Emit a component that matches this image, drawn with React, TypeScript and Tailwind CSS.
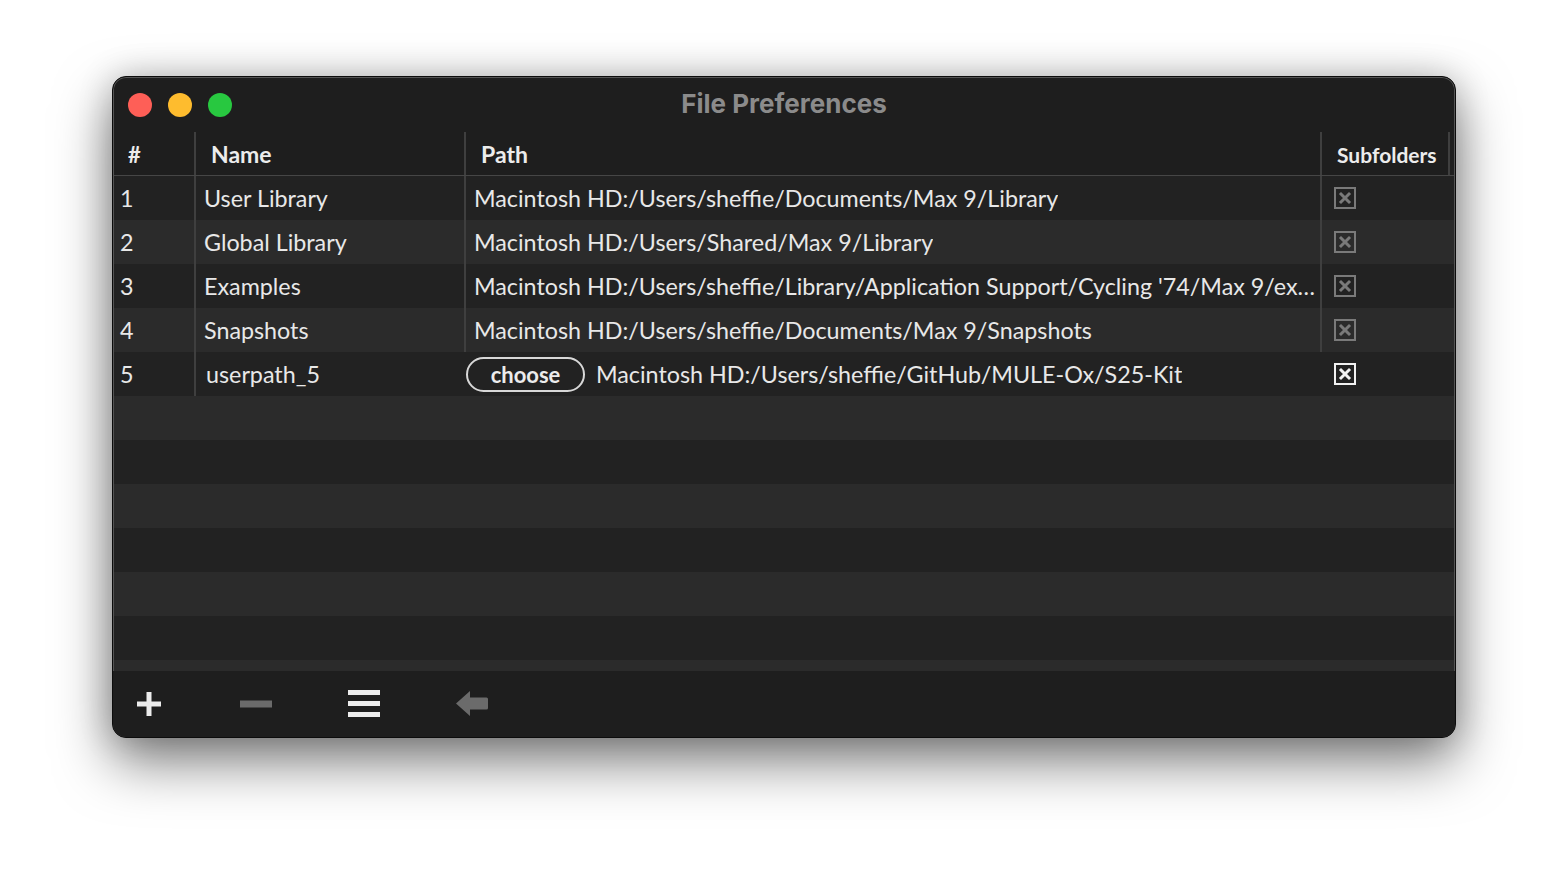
import React from "react";

type Entry = {
  n: number;
  name: string;
  path: string;
  custom?: boolean;
};

const entries: Entry[] = [
  { n: 1, name: "User Library", path: "Macintosh HD:/Users/sheffie/Documents/Max 9/Library" },
  { n: 2, name: "Global Library", path: "Macintosh HD:/Users/Shared/Max 9/Library" },
  {
    n: 3,
    name: "Examples",
    path: "Macintosh HD:/Users/sheffie/Library/Application Support/Cycling '74/Max 9/examples",
  },
  { n: 4, name: "Snapshots", path: "Macintosh HD:/Users/sheffie/Documents/Max 9/Snapshots" },
  { n: 5, name: "userpath_5", path: "Macintosh HD:/Users/sheffie/GitHub/MULE-Ox/S25-Kit", custom: true },
];

const fillerRows = 7;

function Checkbox({ active }: { active?: boolean }) {
  const c = active ? "#f2f2f2" : "#7a7a7a";
  return (
    <svg width="22" height="22" viewBox="0 0 22 22">
      <rect x="1" y="1" width="20" height="20" fill="none" stroke={c} strokeWidth="2" />
      <path d="M7 7 L15 15 M15 7 L7 15" stroke={c} strokeWidth="3" strokeLinecap="square" />
    </svg>
  );
}

function TrafficLights() {
  return (
    <div className="flex items-center gap-4">
      <span className="h-6 w-6 rounded-full bg-[#fe5f57]" />
      <span className="h-6 w-6 rounded-full bg-[#febc2e]" />
      <span className="h-6 w-6 rounded-full bg-[#28c840]" />
    </div>
  );
}

function Toolbar() {
  return (
    <div className="flex h-[66px] items-center bg-[#1e1e1e] pl-[24px]">
      {/* add */}
      <svg width="24" height="24" viewBox="0 0 24 24" className="mr-[79px]">
        <rect x="9.5" y="0" width="5" height="24" fill="#ececec" />
        <rect x="0" y="9.5" width="24" height="5" fill="#ececec" />
      </svg>
      {/* remove */}
      <svg width="32" height="8" viewBox="0 0 32 8" className="mr-[76px]">
        <rect x="0" y="0.5" width="32" height="7" fill="#6b6b6b" />
      </svg>
      {/* list */}
      <svg width="32" height="28" viewBox="0 0 32 28" className="mr-[76px]">
        <rect x="0" y="0" width="32" height="5" fill="#ececec" />
        <rect x="0" y="11" width="32" height="5" fill="#ececec" />
        <rect x="0" y="22" width="32" height="5" fill="#ececec" />
      </svg>
      {/* back */}
      <svg width="32" height="26" viewBox="0 0 32 26">
        <path
          d="M0 12.5 L14 0 L14 6.5 L30.5 6.5 Q32 6.5 32 8 L32 17 Q32 18.5 30.5 18.5 L14 18.5 L14 25 Z"
          fill="#6b6b6b"
        />
      </svg>
    </div>
  );
}

export default function App() {
  return (
    <main
      className="min-h-screen w-full bg-white pl-[112px] pt-[76px]"
      style={{ fontFamily: "Lato, 'Noto Sans', sans-serif" }}
    >
      <div className="flex h-[662px] w-[1344px] flex-col overflow-hidden rounded-[14px] border border-[#0c0c0c] bg-[#1e1e1e] shadow-[inset_0_0_0_1px_#545454,0_24px_55px_rgba(0,0,0,0.5),0_0_34px_rgba(0,0,0,0.2)]">
        <div className="flex h-[55px] shrink-0 items-center px-[15px]">
          <TrafficLights />
          <div
            className="flex-1 pb-[2px] pr-[104px] text-center text-[26px] font-bold text-[#8b8b8b]"
            style={{ fontFamily: "Inter, 'Open Sans', sans-serif" }}
          >
            File Preferences
          </div>
        </div>

        <div className="flex flex-1 flex-col overflow-hidden px-px">
          {/* header */}
          <div className="flex h-[44px] shrink-0 border-b border-[#464646] text-[22px] font-bold text-[#ececec]">
            <div className="flex w-[82px] items-center border-r-2 border-[#3f3f3f] pl-[14px] pt-[2px]">#</div>
            <div className="flex w-[270px] items-center border-r-2 border-[#3f3f3f] pl-[15px] pt-[2px] text-[23px]">
              Name
            </div>
            <div className="flex w-[856px] items-center border-r-2 border-[#3f3f3f] pl-[15px] pt-[2px] text-[23px]">
              Path
            </div>
            <div className="flex w-[128px] items-center border-r-2 border-[#3f3f3f] pl-[15px] pt-[2px] text-[21px]">
              Subfolders
            </div>
            <div className="flex-1" />
          </div>

          {/* rows */}
          {entries.map((e, i) => (
            <div
              key={e.n}
              className={`flex h-[44px] shrink-0 text-[23.3px] text-[#e8e8e8] ${
                i % 2 === 0 ? "bg-[#222222]" : "bg-[#2b2b2b]"
              }`}
            >
              <div className="flex w-[82px] items-center border-r-2 border-[#3f3f3f] pl-[6px]">{e.n}</div>
              <div
                className={`flex w-[270px] items-center border-r-2 pl-[8px] ${
                  e.custom ? "border-transparent pl-[10px]" : "border-[#3f3f3f]"
                }`}
              >
                {e.name}
              </div>
              <div
                className={`flex w-[856px] items-center overflow-hidden border-r-2 ${
                  e.custom ? "border-transparent" : "border-[#3f3f3f] pl-[8px] pr-[4px]"
                }`}
              >
                {e.custom && (
                  <span className="mr-[11px] flex h-[35px] w-[119px] shrink-0 items-center justify-center rounded-full border-2 border-[#d8d8d8] text-[22px] font-bold text-[#ececec]">
                    choose
                  </span>
                )}
                <span className="truncate">{e.path}</span>
              </div>
              <div className="flex w-[128px] items-center pl-[12px]">
                <Checkbox active={e.custom} />
              </div>
              <div className="flex-1" />
            </div>
          ))}
          {Array.from({ length: fillerRows }).map((_, i) => (
            <div
              key={`f${i}`}
              className={`h-[44px] shrink-0 ${i % 2 === 0 ? "bg-[#2b2b2b]" : "bg-[#222222]"}`}
            />
          ))}
        </div>

        <Toolbar />
      </div>
    </main>
  );
}
